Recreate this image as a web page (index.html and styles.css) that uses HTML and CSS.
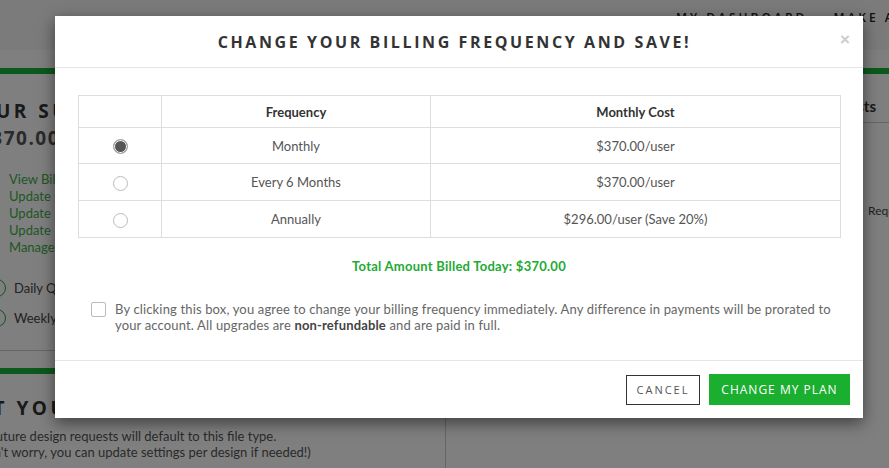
FILE: index.html
```html
<!DOCTYPE html>
<html>
<head>
<meta charset="utf-8">
<link rel="stylesheet" href="styles.css">
</head>
<body>
<div class="page">
  <header class="topbar">
    <nav class="nav"><span>MY DASHBOARD</span><span>MAKE A REQUEST</span></nav>
  </header>
  <div class="columns">
    <section class="left">
      <div class="greenbar"></div>
      <h2 class="sub-title">YOUR SUBSCRIPTION</h2>
      <div class="sub-price">$370.00</div>
      <ul class="links">
        <li>View Billing History</li>
        <li>Update Payment Method</li>
        <li>Update Billing Address</li>
        <li>Update Billing Frequency</li>
        <li>Manage Subscription</li>
      </ul>
      <div class="opt"><span class="ring"></span>Daily Quota Reports</div>
      <div class="opt"><span class="ring"></span>Weekly Reports</div>
      <div class="sep"></div>
      <div class="greenbar second"></div>
      <h2 class="sub-title what">WHAT YOUR FILE TYPE</h2>
      <p class="note">All future design requests will default to this file type.<br>(Don't worry, you can update settings per design if needed!)</p>
    </section>
    <section class="right">
      <div class="greenbar"></div>
      <div class="tabs"><span>Design Requests</span></div>
      <div class="req">Requests</div>
    </section>
  </div>
</div>
<div class="overlay"></div>
<div class="modal">
  <div class="modal-header">
    <h1 class="modal-title">CHANGE YOUR BILLING FREQUENCY AND SAVE!</h1>
    <span class="close">&times;</span>
  </div>
  <div class="modal-body">
    <table class="freq">
      <colgroup><col class="c1"><col class="c2"><col class="c3"></colgroup>
      <thead>
        <tr><th></th><th>Frequency</th><th>Monthly Cost</th></tr>
      </thead>
      <tbody>
        <tr><td><span class="radio checked"></span></td><td>Monthly</td><td>$370.00/user</td></tr>
        <tr><td><span class="radio"></span></td><td>Every 6 Months</td><td>$370.00/user</td></tr>
        <tr><td><span class="radio"></span></td><td>Annually</td><td>$296.00/user (Save 20%)</td></tr>
      </tbody>
    </table>
    <div class="total">Total Amount Billed Today: $370.00</div>
    <label class="agree">
      <span class="checkbox"></span>
      <span class="agree-text">By clicking this box, you agree to change your billing frequency immediately. Any difference in payments will be prorated to your account. All upgrades are <b>non-refundable</b> and are paid in full.</span>
    </label>
  </div>
  <div class="modal-footer">
    <button class="btn btn-cancel">CANCEL</button>
    <button class="btn btn-primary">CHANGE MY PLAN</button>
  </div>
</div>
</body>
</html>
```

FILE: styles.css
```css
* { box-sizing: border-box; }
html, body { margin: 0; padding: 0; }
body {
  width: 889px;
  height: 468px;
  overflow: hidden;
  font-family: Lato, "Open Sans", sans-serif;
  background: #fff;
  position: relative;
}
.page { width: 889px; }
.topbar {
  height: 50px;
  background: #f6f6f6;
  padding-top: 9px;
  overflow: hidden;
}
.nav {
  display: flex;
  gap: 26px;
  margin-left: 676px;
  white-space: nowrap;
  font-family: "Open Sans", sans-serif;
  font-weight: 600;
  font-size: 12px;
  letter-spacing: 3px;
  color: #222;
}
.columns {
  display: flex;
  padding-top: 18px;
}
.left {
  width: 446px;
  border-right: 1px solid #ccc;
  height: 400px;
  overflow: hidden;
}
.right { flex: 1; overflow: hidden; }
.greenbar { height: 6px; background: #16b23b; }
.greenbar.second { margin-top: 17px; }
.sub-title {
  margin: 25px 0 0 -38px;
  font-family: "Open Sans", sans-serif;
  font-weight: 700;
  font-size: 19px;
  letter-spacing: 3.5px;
  color: #333;
  line-height: 24px;
  white-space: nowrap;
}
.sub-price {
  margin: 2px 0 0 -21px;
  font-family: "Open Sans", sans-serif;
  font-weight: 700;
  font-size: 19px;
  letter-spacing: 1.5px;
  color: #555;
}
.links {
  list-style: none;
  margin: 20px 0 0 9px;
  padding: 0;
  font-size: 13px;
  line-height: 17px;
  color: #3fae49;
}
.opt {
  display: flex;
  align-items: center;
  gap: 8px;
  margin: 25px 0 0 -12px;
  font-size: 13px;
  color: #444;
  height: 14px;
}
.opt + .opt { margin-top: 16px; }
.ring {
  width: 18px; height: 18px;
  border: 1.5px solid #2e9e3e;
  border-radius: 50%;
}
.sep { height: 1px; background: #ccc; margin-top: 25px; }
.what { margin-top: 22px; margin-left: -63px; }
.note {
  margin: 8px 0 0 -27px;
  font-size: 13px;
  line-height: 16px;
  color: #555;
  white-space: nowrap;
}
.tabs {
  height: 49px;
  border-bottom: 1px solid #ccc;
  display: flex;
  justify-content: flex-end;
  align-items: center;
  padding-right: 13px;
  padding-top: 16px;
  font-size: 15px;
  font-weight: 700;
  color: #333;
}
.req {
  text-align: right;
  margin-right: -27px;
  margin-top: 80px;
  font-size: 12px;
  color: #444;
}

.overlay {
  position: absolute;
  inset: 0;
  background: rgba(0,0,0,0.5);
}
.modal {
  position: absolute;
  left: 55px;
  top: 16px;
  width: 808px;
  background: #fff;
  box-shadow: 0 5px 15px rgba(0,0,0,0.5);
}
.modal-header {
  height: 52px;
  border-bottom: 1px solid #e5e5e5;
  display: flex;
  align-items: center;
  justify-content: center;
  position: relative;
}
.modal-title {
  margin: 0 0 0 -9px;
  font-family: "Open Sans", sans-serif;
  font-weight: 700;
  font-size: 16px;
  letter-spacing: 2.6px;
  color: #333;
}
.close {
  position: absolute;
  right: 13px;
  top: 14px;
  font-size: 17px;
  font-weight: 700;
  color: #ccc;
  font-family: Arial, "Liberation Sans", sans-serif;
}
.modal-body {
  padding: 27px 23px 0 23px;
}
.freq {
  width: 762px;
  border-collapse: collapse;
  table-layout: fixed;
  font-size: 13px;
  color: #555;
}
.c1 { width: 83px; }
.c2 { width: 269px; }
.c3 { width: 410px; }
.freq th, .freq td {
  border: 1px solid #ddd;
  text-align: center;
  padding: 0;
}
.freq th {
  height: 32px;
  font-weight: 700;
  color: #333;
}
.freq td { height: 37px; }
.freq tbody tr:first-child td { height: 36px; }
.radio {
  display: inline-block;
  width: 15px; height: 15px;
  border: 1px solid #bbb;
  border-radius: 50%;
  vertical-align: middle;
  margin-top: 0;
  background: #fff;
}
.radio.checked {
  background: #555;
  box-shadow: inset 0 0 0 1px #fff;
  border-color: #aaa;
}
.total {
  text-align: center;
  margin-top: 20px;
  font-weight: 700;
  font-size: 13px;
  letter-spacing: 0.25px;
  color: #22aa33;
}
.agree {
  display: flex;
  gap: 9px;
  margin: 27px 0 0 13px;
  padding-bottom: 27px;
}
.checkbox {
  flex: none;
  width: 15px; height: 15px;
  border: 1px solid #bbb;
  border-radius: 2px;
  margin-top: 1px;
}
.agree-text {
  font-size: 13px;
  line-height: 16px;
  letter-spacing: 0.15px;
  color: #666;
}
.agree-text b { color: #444; }
.modal-footer {
  border-top: 1px solid #e5e5e5;
  display: flex;
  justify-content: flex-end;
  align-items: center;
  gap: 9px;
  padding: 13px 13px 13px 0;
}
.btn {
  font-family: "Open Sans", sans-serif;
  font-size: 11px;
  letter-spacing: 2px;
  border-radius: 0;
  cursor: pointer;
}
.btn-cancel {
  width: 74px;
  height: 30px;
  background: #fff;
  border: 1px solid #333;
  color: #555;
}
.btn-primary {
  width: 141px;
  height: 31px;
  background: #1aaf2f;
  border: none;
  color: #fff;
  font-weight: 500;
  font-size: 12px;
  letter-spacing: 1px;
}
```
